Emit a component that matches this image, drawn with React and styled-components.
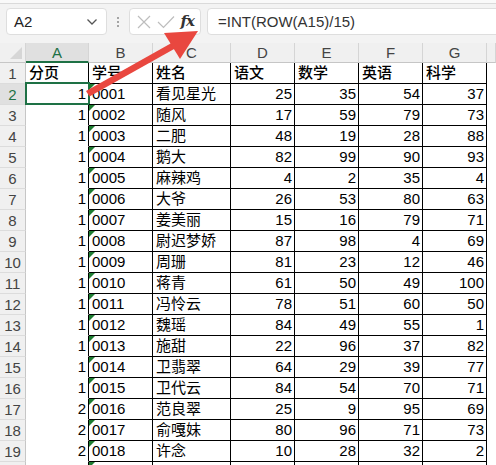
import React from 'react'
import styled, { createGlobalStyle } from 'styled-components'

const GlobalStyle = createGlobalStyle`
    html, body {
        margin : 0;
        padding : 0;
        background : #ffffff;
        overflow : hidden;
    }
`

const COLS = [
    { key: 'A', width: 63 },
    { key: 'B', width: 64 },
    { key: 'C', width: 78 },
    { key: 'D', width: 64 },
    { key: 'E', width: 64 },
    { key: 'F', width: 64 },
    { key: 'G', width: 64 },
]

const GRID = `26px ${COLS.map(c => c.width + 'px').join(' ')} 1fr`

const head = ['分页', '学号', '姓名', '语文', '数学', '英语', '科学']

const rows = [
    [1, '0001', '看见星光', 25, 35, 54, 37],
    [1, '0002', '随风', 17, 59, 79, 73],
    [1, '0003', '二肥', 48, 19, 28, 88],
    [1, '0004', '鹅大', 82, 99, 90, 93],
    [1, '0005', '麻辣鸡', 4, 2, 35, 4],
    [1, '0006', '大爷', 26, 53, 80, 63],
    [1, '0007', '姜美丽', 15, 16, 79, 71],
    [1, '0008', '尉迟梦娇', 87, 98, 4, 69],
    [1, '0009', '周珊', 81, 23, 12, 46],
    [1, '0010', '蒋青', 61, 50, 49, 100],
    [1, '0011', '冯怜云', 78, 51, 60, 50],
    [1, '0012', '魏瑶', 84, 49, 55, 1],
    [1, '0013', '施甜', 22, 96, 37, 82],
    [1, '0014', '卫翡翠', 64, 29, 39, 77],
    [1, '0015', '卫代云', 84, 54, 70, 71],
    [2, '0016', '范良翠', 25, 9, 95, 69],
    [2, '0017', '俞嘎妹', 80, 96, 71, 73],
    [2, '0018', '许念', 10, 28, 32, 2],
    ['', '', '', '', '', '', ''],
]

const App = () => {
    return (
        <>
            <GlobalStyle />
            <Page>
                <TopStrip />
                <FormulaBar>
                    <NameBox>
                        <NameText>A2</NameText>
                        <svg width="12" height="8" viewBox="0 0 12 8">
                            <path d="M1.5 1.5 L6 6 L10.5 1.5" fill="none" stroke="#555" strokeWidth="1.3" />
                        </svg>
                    </NameBox>
                    <Grip>
                        <i /><i /><i />
                    </Grip>
                    <FuncBox>
                        <svg width="16" height="16" viewBox="0 0 16 16">
                            <path d="M2 2 L14 14 M14 2 L2 14" stroke="#bdbdbd" strokeWidth="1.2" fill="none" />
                        </svg>
                        <svg width="18" height="14" viewBox="0 0 18 14">
                            <path d="M1 7 L6.5 12.5 L17 1.5" stroke="#bdbdbd" strokeWidth="1.2" fill="none" />
                        </svg>
                        <Fx>fx</Fx>
                    </FuncBox>
                    <FormulaBox>=INT(ROW(A15)/15)</FormulaBox>
                </FormulaBar>
                <Sheet>
                    <Row $header>
                        <Corner />
                        {COLS.map(c => (
                            <ColHead key={c.key} $active={c.key === 'A'}>{c.key}</ColHead>
                        ))}
                        <ColHead />
                    </Row>
                    <Row>
                        <RowHead>1</RowHead>
                        {head.map((h, i) => (
                            <Cell key={i} $colA={i === 0} $bold>{h}</Cell>
                        ))}
                        <Spare />
                    </Row>
                    {rows.map((r, ri) => {
                        const n = ri + 2
                        return (
                            <Row key={n}>
                                <RowHead $active={n === 2}>{n < 20 ? n : ''}</RowHead>
                                {r.map((v, i) => (
                                    <Cell
                                        key={i}
                                        $colA={i === 0}
                                        $num={typeof v === 'number'}
                                        $flag={i === 1}
                                    >
                                        {v}
                                        {n === 2 && i === 0 && <Selection />}
                                    </Cell>
                                ))}
                                <Spare />
                            </Row>
                        )
                    })}
                </Sheet>
                <Arrow viewBox="0 0 496 465" width="496" height="465">
                    <path d="M86 91 L89.5 96.5 L175 48.5 L171.5 43 Z" fill="#e9473f" />
                    <polygon points="164,33 198,31 180,59" fill="#e9473f" />
                </Arrow>
            </Page>
        </>
    )
}

const Page = styled.div`
    position : relative;
    width : 496px;
    height : 465px;
    overflow : hidden;
    font-family : "Liberation Sans", "Noto Sans CJK SC", sans-serif;
    background : #ffffff;
`
const TopStrip = styled.div`
    height : 3px;
    background : #f9f9f9;
    border-bottom : 1px solid #dadada;
    box-shadow : 0 1px 2px rgba(0,0,0,0.08);
`
const FormulaBar = styled.div`
    height : 39px;
    box-sizing : border-box;
    padding : 4px 0 0 6px;
    background : #f3f3f3;
    display : flex;
    align-items : flex-start;
`
const Box = styled.div`
    height : 27px;
    box-sizing : border-box;
    background : #ffffff;
    border : 1px solid #dedede;
    border-radius : 4px;
    display : flex;
    align-items : center;
`
const NameBox = styled(Box)`
    width : 101px;
    padding : 0 8px 0 7px;
    justify-content : space-between;
`
const NameText = styled.span`
    font-size : 15px;
    color : #222;
`
const Grip = styled.div`
    width : 22px;
    height : 27px;
    display : flex;
    flex-direction : column;
    align-items : center;
    justify-content : center;
    gap : 2px;
    & i {
        width : 2px;
        height : 2px;
        background : #8a8a8a;
        border-radius : 1px;
    }
`
const FuncBox = styled(Box)`
    width : 72px;
    padding : 0 6px 0 6px;
    justify-content : space-between;
`
const Fx = styled.span`
    font-family : "DejaVu Serif", "Liberation Serif", serif;
    font-style : italic;
    font-weight : bold;
    font-size : 15px;
    color : #333;
    letter-spacing : -1px;
    padding-bottom : 2px;
`
const FormulaBox = styled(Box)`
    flex : 1;
    margin-left : 6px;
    margin-right : -8px;
    padding-left : 10px;
    font-size : 15px;
    color : #333;
`
const Sheet = styled.div`
    display : flex;
    flex-direction : column;
`
const Row = styled.div`
    display : grid;
    grid-template-columns : ${GRID};
    height : ${props => props.$header ? '20px' : '21px'};
`
const Corner = styled.div`
    position : relative;
    background : #f0f0f0;
    border-right : 1px solid #d5d5d5;
    border-bottom : 1px solid #c6c6c6;
    &::after {
        content : '';
        position : absolute;
        right : 3px;
        bottom : 3px;
        border-left : 12px solid transparent;
        border-bottom : 12px solid #d6d6d6;
    }
`
const ColHead = styled.div`
    box-sizing : border-box;
    background : ${props => props.$active ? '#e0e0e0' : '#f0f0f0'};
    border-right : 1px solid #d5d5d5;
    border-bottom : ${props => props.$active ? '2px solid #1e7145' : '1px solid #c6c6c6'};
    color : ${props => props.$active ? '#1e7145' : '#444'};
    font-size : 15px;
    display : flex;
    align-items : center;
    justify-content : center;
    padding-top : ${props => props.$active ? '1px' : '0'};
`
const RowHead = styled.div`
    box-sizing : border-box;
    background : ${props => props.$active ? '#e0e0e0' : '#f0f0f0'};
    border-right : 1px solid #c6c6c6;
    border-bottom : 1px solid #dcdcdc;
    color : ${props => props.$active ? '#1e7145' : '#444'};
    font-size : 15px;
    display : flex;
    align-items : center;
    justify-content : center;
`
const Cell = styled.div`
    position : relative;
    box-sizing : border-box;
    border-right : 1px solid #000;
    border-bottom : ${props => props.$colA ? '1px solid transparent' : '1px solid #000'};
    font-size : 15px;
    font-weight : ${props => props.$bold ? 500 : 400};
    color : #000;
    white-space : nowrap;
    line-height : 20px;
    padding : 0 2px 0 3px;
    text-align : ${props => props.$num ? 'right' : 'left'};
    &::before {
        content : '';
        display : ${props => props.$flag ? 'block' : 'none'};
        position : absolute;
        left : 0;
        top : 0;
        border-top : 6px solid #1e7d32;
        border-right : 6px solid transparent;
    }
`
const Spare = styled.div`
    background : #ffffff;
`
const Selection = styled.div`
    position : absolute;
    left : -1px;
    top : -2px;
    right : -2px;
    bottom : -1px;
    border : 2px solid #1e7145;
    pointer-events : none;
`
const Arrow = styled.svg`
    position : absolute;
    left : 0;
    top : 0;
    pointer-events : none;
`

export default App
